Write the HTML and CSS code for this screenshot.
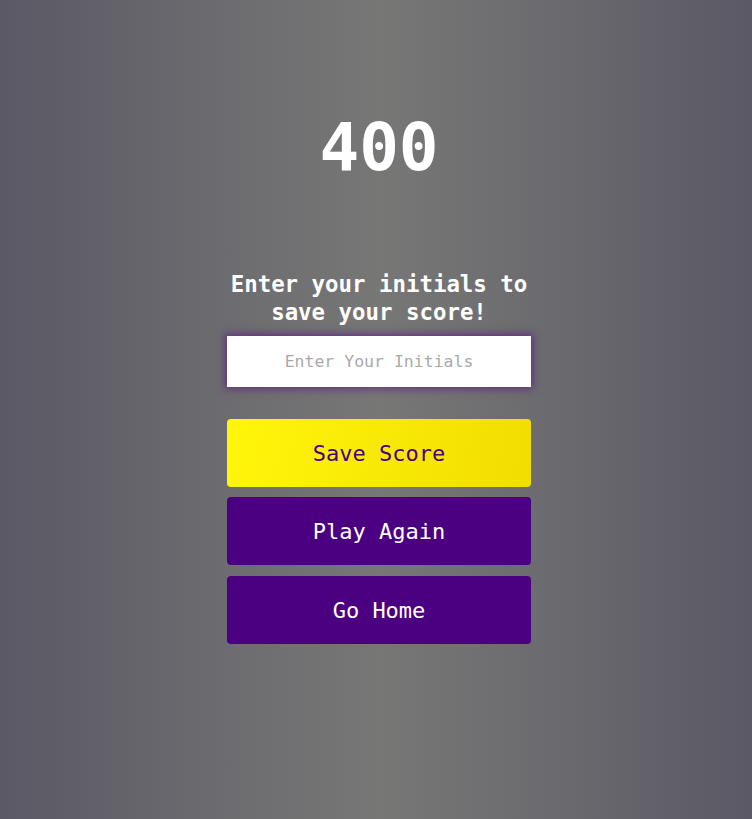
FILE: index.html
```html
<!DOCTYPE html>
<html>
<head>
<meta charset="utf-8">
<link rel="stylesheet" href="styles.css">
</head>
<body>
<main class="page">
  <h1 class="score">400</h1>
  <form class="form">
    <h2 class="prompt">Enter your initials to save your score!</h2>
    <input class="initials" type="text" placeholder="Enter Your Initials">
    <button type="button" class="btn btn-save">Save Score</button>
    <button type="button" class="btn btn-purple">Play Again</button>
    <button type="button" class="btn btn-purple">Go Home</button>
  </form>
</main>
</body>
</html>
```
FILE: styles.css
```css
html, body {
  margin: 0;
  padding: 0;
  height: 100%;
}
body {
  background: linear-gradient(to right, #5a5965 0%, #6a696e 25.5%, #777776 50.4%, #6a696e 75.5%, #5a5965 100%);
  font-family: "DejaVu Sans Mono", monospace;
  color: #fff;
}
.page {
  display: flex;
  flex-direction: column;
  align-items: center;
  padding-left: 6px;
}
.score {
  margin: 108px 0 0;
  font-size: 66px;
  line-height: 80px;
  font-weight: bold;
}
.form {
  width: 304px;
  margin-top: 82px;
  display: flex;
  flex-direction: column;
  align-items: stretch;
}
.prompt {
  margin: 0 0 10px;
  font-size: 22.4px;
  line-height: 28px;
  font-weight: bold;
  text-align: center;
}
.initials {
  height: 51px;
  box-sizing: border-box;
  border: none;
  outline: none;
  background: #fff;
  font-family: "DejaVu Sans Mono", monospace;
  font-size: 16.5px;
  text-align: center;
  box-shadow: 0 0 8px 2px rgba(90, 30, 130, 0.75);
  margin-bottom: 32px;
}
.initials::placeholder {
  color: #a9a9a9;
}
.btn {
  height: 68px;
  border: none;
  border-radius: 4px;
  font-family: "DejaVu Sans Mono", monospace;
  font-size: 22px;
  margin-bottom: 10px;
  cursor: pointer;
}
.btn-save {
  background: linear-gradient(100deg, #fff60a 0%, #f2dd02 100%);
  color: #4b0082;
}
.btn-purple {
  background: #4b0082;
  color: #fff;
}
.btn-purple + .btn-purple {
  margin-top: 1px;
}
```
